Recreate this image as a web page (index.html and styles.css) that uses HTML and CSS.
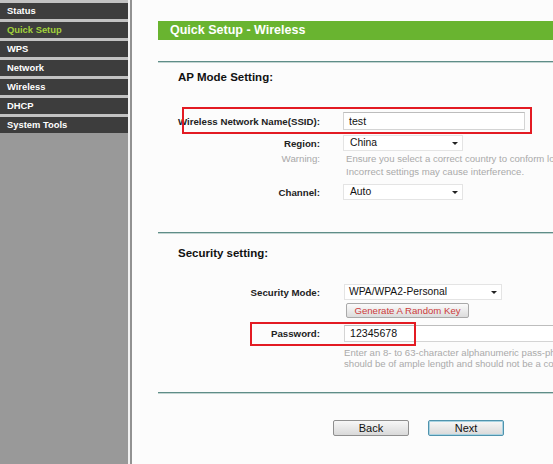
FILE: index.html
```html
<!DOCTYPE html>
<html>
<head>
<meta charset="utf-8">
<link rel="stylesheet" href="styles.css">
</head>
<body>
<div class="page">
  <nav class="sidebar">
    <ul class="menu">
      <li class="menu-item">Status</li>
      <li class="menu-item active">Quick Setup</li>
      <li class="menu-item">WPS</li>
      <li class="menu-item">Network</li>
      <li class="menu-item">Wireless</li>
      <li class="menu-item">DHCP</li>
      <li class="menu-item">System Tools</li>
    </ul>
  </nav>
  <div class="divider"></div>
  <main class="main">
    <div class="title-bar">Quick Setup - Wireless</div>
    <div class="rule rule-1"></div>
    <h2 class="section-head head-ap">AP Mode Setting:</h2>

    <div class="row row-ssid">
      <div class="label">Wireless Network Name(SSID):</div>
      <div class="value"><div class="input input-ssid">test</div></div>
    </div>
    <div class="row row-region">
      <div class="label">Region:</div>
      <div class="value"><div class="select sel-short">China<span class="arrow"></span></div></div>
    </div>
    <div class="row row-warning">
      <div class="label muted">Warning:</div>
      <div class="value hint">
        <div class="hint-line">Ensure you select a correct country to conform local law.</div>
        <div class="hint-line">Incorrect settings may cause interference.</div>
      </div>
    </div>
    <div class="row row-channel">
      <div class="label">Channel:</div>
      <div class="value"><div class="select sel-short">Auto<span class="arrow"></span></div></div>
    </div>

    <div class="rule rule-2"></div>
    <h2 class="section-head head-sec">Security setting:</h2>

    <div class="row row-mode">
      <div class="label">Security Mode:</div>
      <div class="value"><div class="select sel-long">WPA/WPA2-Personal<span class="arrow"></span></div></div>
    </div>
    <div class="row row-gen">
      <div class="label"></div>
      <div class="value"><button class="gen-btn">Generate A Random Key</button></div>
    </div>
    <div class="row row-pass">
      <div class="label">Password:</div>
      <div class="value"><div class="input input-pass">12345678</div></div>
    </div>
    <div class="row row-hint">
      <div class="label"></div>
      <div class="value hint">
        <div class="hint-line">Enter an 8- to 63-character alphanumeric pass-phrase. For good security, it</div>
        <div class="hint-line">should be of ample length and should not be a commonly known phrase.</div>
      </div>
    </div>

    <div class="rule rule-3"></div>

    <div class="buttons">
      <button class="btn">Back</button>
      <button class="btn btn-next">Next</button>
    </div>

    <div class="mark mark-ssid"></div>
    <div class="mark mark-pass"></div>
  </main>
</div>
</body>
</html>
```

FILE: styles.css
```css
* { box-sizing: border-box; }
html, body { margin: 0; padding: 0; }
body {
  font-family: "Liberation Sans", Arial, sans-serif;
  background: #fcfcfc;
  overflow: hidden;
}
.page {
  display: flex;
  width: 553px;
  height: 464px;
  overflow: hidden;
}
.sidebar {
  width: 128px;
  flex-shrink: 0;
  background: #999999;
}
.menu {
  list-style: none;
  margin: 0;
  padding: 3px 0 0 0;
  background: #c2c2c2;
  display: flex;
  flex-direction: column;
  gap: 3px;
}
.menu-item {
  height: 16px;
  line-height: 16px;
  background: #3d3d3d;
  color: #ffffff;
  font-weight: bold;
  font-size: 9.4px;
  padding-left: 7px;
}
.menu-item.active { color: #a2d13c; }
.divider {
  width: 4px;
  flex-shrink: 0;
  background: #f2f2f2;
  border-right: 2px solid #929292;
}
.main {
  position: relative;
  flex: 1;
  min-width: 0;
  padding: 21px 0 0 26px;
  background: #fcfcfc;
}
.title-bar {
  height: 19px;
  line-height: 19px;
  background: #69b430;
  color: #ffffff;
  font-weight: bold;
  font-size: 12.5px;
  padding-left: 12px;
}
.rule {
  height: 2px;
  background: #c3d5d2;
  border-top: 1px solid #5f8d88;
}
.rule-1 { margin-top: 21px; }
.rule-2 { margin-top: 32px; }
.rule-3 { margin-top: 23px; }
.section-head {
  margin: 0;
  font-size: 11.5px;
  font-weight: bold;
  line-height: 14px;
  color: #111;
  padding-left: 20px;
}
.head-ap { margin-top: 7px; }
.head-sec { margin-top: 12px; }
.row {
  display: grid;
  grid-template-columns: 162px 1fr;
  column-gap: 23px;
  align-items: center;
}
.label {
  text-align: right;
  font-size: 9.7px;
  font-weight: bold;
  color: #222;
  white-space: nowrap;
}
.label.muted { font-weight: normal; color: #a8a8a8; font-size: 9.7px; align-self: start; line-height: 13px; }
.value { white-space: nowrap; }
.row-ssid { margin-top: 28px; height: 18px; }
.row-region { margin-top: 5px; }
.row-warning { margin-top: 1px; align-items: start; }
.row-channel { margin-top: 6px; }
.row-mode { margin-top: 24px; }
.row-gen { margin-top: 3px; }
.row-pass { margin-top: 7px; }
.row-hint { margin-top: 5px; }
.hint { color: #aaaaaa; font-size: 9.6px; }
.row-warning .hint-line { line-height: 13px; padding-left: 3px; }
.row-hint .hint-line { line-height: 11px; padding-left: 1px; }
.input {
  background: #ffffff;
  border: 1px solid #d4d4d4;
  border-top-color: #bdbdbd;
  font-size: 10.6px;
  color: #111;
  padding-left: 5px;
}
.input-ssid { width: 182px; height: 18px; line-height: 16px; }
.input-pass { width: 260px; height: 17px; line-height: 15px; margin-left: 1px; }
.select {
  position: relative;
  height: 16px;
  line-height: 14px;
  background: #ffffff;
  border: 1px solid #e4e4e4;
  font-size: 10.3px;
  color: #111;
  padding-left: 6px;
}
.sel-short { width: 120px; }
.sel-long { width: 158px; margin-left: 1px; padding-left: 4px; }
.arrow {
  position: absolute;
  right: 4px;
  top: 6px;
  width: 0;
  height: 0;
  border-left: 3px solid transparent;
  border-right: 3px solid transparent;
  border-top: 3px solid #222;
}
.gen-btn {
  display: block;
  margin: 0 0 0 3px;
  width: 123px;
  height: 15px;
  padding: 0;
  font-family: inherit;
  font-size: 9.6px;
  line-height: 13px;
  color: #cc3a3a;
  background: linear-gradient(#fbfbfb, #dcdcdc);
  border: 1px solid #a9a9a9;
  border-radius: 2px;
}
.buttons {
  display: flex;
  gap: 19px;
  margin-top: 26px;
  padding-left: 175px;
}
.btn {
  width: 76px;
  height: 16px;
  padding: 0;
  font-family: inherit;
  font-size: 11px;
  line-height: 14px;
  color: #111;
  background: linear-gradient(#f7f7f7, #d9d9d9);
  border: 1px solid #8f8f8f;
  border-radius: 2px;
}
.btn-next {
  border: 1px solid #4f93ad;
  box-shadow: inset 0 0 0 1px #a9d3e2;
}
.mark {
  position: absolute;
  border: 2px solid #e31b23;
}
.mark-ssid { left: 50px; top: 107px; width: 350px; height: 27px; }
.mark-pass { left: 118px; top: 322px; width: 166px; height: 24px; }
```
